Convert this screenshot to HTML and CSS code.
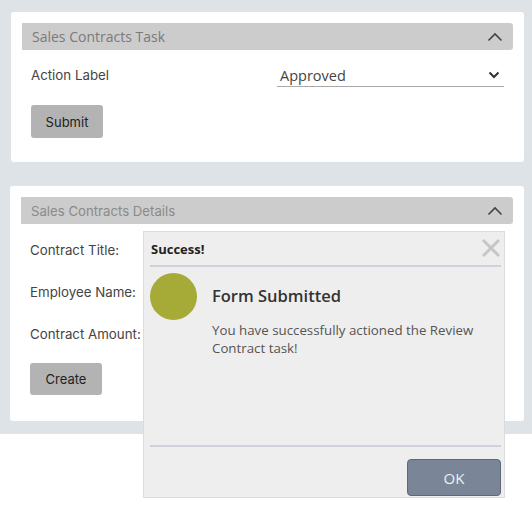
FILE: index.html
```html
<!DOCTYPE html>
<html>
<head>
<meta charset="utf-8">
<link rel="stylesheet" href="styles.css">
</head>
<body>
<div class="page">
  <section class="card card-task">
    <div class="card-head head-task">
      <span>Sales Contracts Task</span>
      <svg class="chev" width="16" height="10" viewBox="0 0 16 10"><path d="M1.5 8.5 L8 2 L14.5 8.5" fill="none" stroke="#444" stroke-width="1.6"/></svg>
    </div>
    <div class="field-row">
      <span class="label">Action Label</span>
      <div class="select">
        <span>Approved</span>
        <svg width="12" height="8" viewBox="0 0 12 8"><path d="M1.5 1.5 L6 6 L10.5 1.5" fill="none" stroke="#333" stroke-width="2"/></svg>
      </div>
    </div>
    <button class="btn">Submit</button>
  </section>

  <section class="card card-details">
    <div class="card-head head-details">
      <span>Sales Contracts Details</span>
      <svg class="chev" width="16" height="10" viewBox="0 0 16 10"><path d="M1.5 8.5 L8 2 L14.5 8.5" fill="none" stroke="#444" stroke-width="1.6"/></svg>
    </div>
    <div class="rows">
      <div class="label">Contract Title:</div>
      <div class="label">Employee Name:</div>
      <div class="label">Contract Amount:</div>
    </div>
    <button class="btn">Create</button>
  </section>
</div>

<div class="dialog">
  <div class="dlg-title">
    <span>Success!</span>
    <svg width="20" height="20" viewBox="0 0 20 20"><path d="M2 2 L18 18 M18 2 L2 18" stroke="#c6c6c6" stroke-width="3"/></svg>
  </div>
  <div class="dlg-body">
    <div class="dot"></div>
    <div class="dlg-text">
      <h2>Form Submitted</h2>
      <p>You have successfully actioned the Review Contract task!</p>
    </div>
  </div>
  <div class="dlg-foot">
    <button class="ok">OK</button>
  </div>
</div>
</body>
</html>
```

FILE: styles.css
```css
* { box-sizing: border-box; }
html, body { margin: 0; padding: 0; background: #fff; }
body { width: 532px; height: 529px; position: relative; overflow: hidden; font-family: "Inter", "Noto Sans", sans-serif; }

.page {
  background: #dde3e6;
  height: 434px;
  padding: 12px 8px 0 10px;
  display: flex;
  flex-direction: column;
  gap: 24px;
}

.card {
  background: #fff;
  border-radius: 3px;
  padding: 11px 11px 0 11px;
}
.card-task { height: 150px; margin-left: 1px; }
.card-details { height: 235px; }

.card-head {
  height: 27px;
  background: #cccccc;
  display: flex;
  align-items: center;
  justify-content: space-between;
  padding: 0 10px 0 10px;
  border-radius: 0 3px 3px 0;
}
.head-task span { font-family: "Open Sans", sans-serif; font-size: 14px; color: #7a7a7a; }
.head-details span { font-family: "Inter", sans-serif; font-size: 13.2px; color: #8a8a8a; padding-left: 0; }
.chev { margin-top: 1px; }

.label { font-size: 13.3px; color: #444; }

.field-row {
  display: flex;
  align-items: flex-start;
  justify-content: space-between;
  margin-top: 17px;
  padding-left: 9px;
}
.field-row .label { margin-top: 0; }
.select {
  width: 227px;
  height: 23px;
  border-bottom: 1px solid #aaa;
  display: flex;
  justify-content: space-between;
  align-items: center;
  padding: 0 4px 0 3px;
  margin-right: 9px;
  margin-top: -3px;
}
.select span { font-family: "Open Sans", sans-serif; font-size: 14.5px; color: #444; }

.btn {
  display: block;
  margin-top: 18px;
  margin-left: 9px;
  width: 72px;
  height: 33px;
  border: none;
  border-radius: 3px;
  background: #b3b3b3;
  font-family: "Inter", sans-serif;
  font-size: 13px;
  color: #222;
  padding: 0;
}
.card-details .btn { margin-top: 21px; height: 32px; }

.rows { display: flex; flex-direction: column; gap: 26px; padding-left: 9px; margin-top: 18px; }
.rows .label { line-height: 16px; }

.dialog {
  position: absolute;
  left: 143px;
  top: 231px;
  width: 362px;
  height: 267px;
  background: #eeeeee;
  border: 1px solid #dcdcdc;
  font-family: "Open Sans", sans-serif;
  display: flex;
  flex-direction: column;
  padding: 0 3px 0 6px;
}
.dlg-title {
  height: 35px;
  border-bottom: 2px solid #cdd2dc;
  display: flex;
  align-items: center;
  justify-content: space-between;
  padding: 0 0 0 1px;
}
.dlg-title span { font-weight: 700; font-size: 13px; color: #222; }
.dlg-title svg { margin-top: -2px; margin-right: 0; }
.dlg-body {
  flex: 1;
  display: flex;
  gap: 15px;
  padding-top: 6px;
  border-bottom: 2px solid #cdd2dc;
}
.dot { width: 47px; height: 47px; border-radius: 50%; background: #a6aa36; flex: none; }
.dlg-text h2 { margin: 11px 0 0 0; font-size: 16.5px; font-weight: 600; color: #333; }
.dlg-text p { margin: 14px 0 0 0; font-size: 13.3px; line-height: 18px; color: #555; }
.dlg-foot {
  height: 50px;
  display: flex;
  justify-content: flex-end;
  align-items: flex-start;
  padding-top: 12px;
}
.ok {
  width: 94px;
  height: 37px;
  background: #7a8597;
  border: 1px solid #5f6878;
  border-radius: 4px;
  color: #f0f0f0;
  font-family: "Open Sans", sans-serif;
  font-size: 15px;
  padding: 0;
}
```
